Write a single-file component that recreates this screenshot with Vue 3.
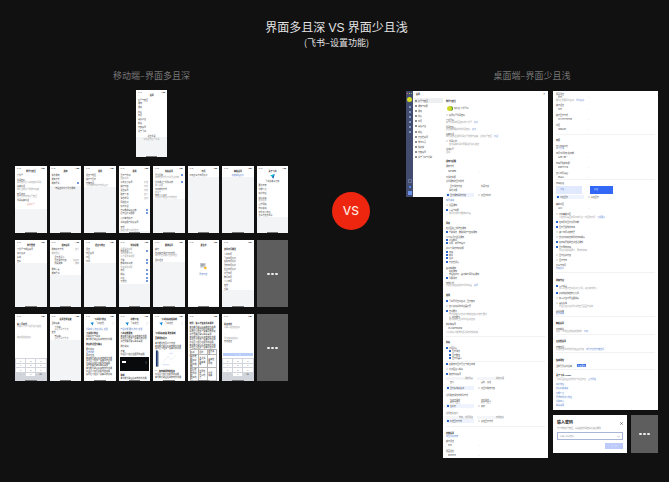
<script setup>
// Each row is [centre line, kind, text, side text]; a row lasts until the next one starts.
const flow = (source) =>
  source.map(([y, kind, text = '', side = ''], i) => ({
    kind, text, side, y,
    height: i + 1 < source.length ? source[i + 1][0] - y : 3,
  }))
const phone = (title, white, rows) => ({ title, white, rows: flow(rows) })

const home = phone('设置', 47, [
  [10, 't', '账号与安全'], [13, 't', '通知'], [17, 't', '通用'], [22, 't', '隐私'], [25, 't', '日历'], [29, 't', '视频会议'],
  [33, 't', '邮箱'], [37, 't', '内部设置'], [41, 't', '关于飞书'], [46, 'c', '退出登录'], [49, 'cg', '切换其他账号登录'],
])
const doc = ['本功能帮助团队高效协作沟通', '设置后可在多个设备同步使用', '管理员可在后台配置的权限', '如果需要帮助请联系客服']

const phones = [
  phone('账号与安全', 43, [[9, 't', '手机号'], [14, 't', '登录密码'], [16, 'g', '设置密码后可使用密码登录'], [20, 't', '设备管理'], [23, 'g', '查看当前账号的所有设备'], [28, 't', '安全验证'], [30, 'g', '用于保护你的账号安全'], [34, 't', '登录设备管理'], [38, 'cr', '注销账号']]),
  phone('通知', 20, [[9, 't', '消息通知'], [13, 't', '通知方式'], [17, 's', '通知开关'], [22, 'c', '电脑在线时手机不通知']]),
  phone('通用', 21, [[9, 't', '语言与地区'], [13, 't', '翻译与显示'], [17, 't', '存储空间'], [19, 'g', '可清理本地缓存文件图片']]),
  phone('通用', 65, [[9, 't', '显示与外观'], [12, 'g', '跟随系统'], [16, 't', '字体大小设置', '标准'], [20, 't', '翻译内容', '中文'], [24, 't', '语言设置', '中文'], [28, 't', '聊天气泡', '默认'], [32, 't', '消息排列', '左侧'], [36, 't', '网络检测', '›'], [40, 't', '缓存管理'], [44, 's', '自动播放视频动态'], [47, 's', '保存图片到相册'], [52, 't', '清除本地缓存', '›'], [56, 't', '系统权限与隐私设置', '›'], [61, 't', '其他'], [64, 'g', '实验功能与系统信息']]),
  phone('隐私设置', 33, [[9, 's', '已读回执'], [11, 'g', '关闭后对方看不到已读状态'], [16, 's', '允许通过手机找到我'], [19, 'g', '搜索权限'], [23, 't', '添加我的方式', '›'], [26, 'g', '黑名单'], [29, 't', '我的个人名片', '›'], [31, 'g', '管理展示在名片中的信息']]),
  phone('日历', 11, [[9, 't', '添加第三方日历账户']]),
  phone('邮箱设置', 11, [[9, 'ck', '绑定邮箱账户']]),
  phone('关于飞书', 51, [[11, 'logo'], [15, 'c', '飞书版本三点四'], [19, 't', '更新日志'], [23, 't', '功能介绍'], [27, 't', '用户协议'], [32, 't', '隐私政策'], [34, 'g', '更多服务'], [38, 't', '官方网站'], [42, 't', '特别说明'], [46, 't', '软件许可协议'], [49, 't', '第三方信息共享']]),
  phone('账号管理', 23, [[9, 't', '手机号与邮箱设置'], [13, 't', '用户名称'], [17, 't', '头像'], [21, 't', '密码']]),
  phone('通知设置', 35, [[9, 't', '通知提示方式', '默认'], [13, 'g', '通知预览'], [17, 'i', '显示发送人'], [20, 'i', '显示消息内容', '仅提示'], [23, 'i', '隐藏通知', '通知'], [29, 't', '通知声音'], [33, 't', '通知震动', '›']]),
  phone('语言与地区', 23, [[9, 't', '语言'], [13, 't', '地区设置'], [17, 't', '时区'], [21, 't', '时间']]),
  phone('特别提醒', 44, [[9, 'g', '重要消息提醒'], [11, 's', '特别关注'], [13, 'g', '消息提醒方式'], [16, 'g', '以下消息将提醒'], [20, 's', '单聊'], [23, 's', '群聊中提到我'], [27, 'g', '应用消息提醒'], [30, 's', '日历'], [34, 's', '邮箱'], [38, 's', '会议'], [41, 's', '云文档']]),
  phone('翻译设置', 22, [[9, 't', '翻译'], [13, 't', '自动翻译消息与云文档'], [15, 'g', '消息会自动翻译目标语言'], [20, 't', '目标语言', '›']]),
  phone('黑名单', 66, [[26, 'cow'], [34, 'ck', '暂无内容']]),
  phone('', 50, [[9, 'b', '选择日历类型'], [14, 't', '公共日历'], [18, 't', '飞书日历账户', '›'], [21, 't', '谷歌日历账户'], [25, 't', '微软日历账户'], [29, 't', '企业日历账户'], [33, 't', '苹果日历'], [37, 't', '腾讯日历'], [41, 't', '个人日历'], [45, 't', '其他'], [49, 't', '帮助']]),
  null,
  { ...phone('', 66, [[10, 'b', '输入手机号'], [12, 'g', '请输入手机号进行身份验证'], [20, 'g', '|'], [23, 'g', '获取短信验证码']]), keypad: true },
  phone('设置登录设备', 26, [[9, 't', '当前设备'], [13, 'i', '手机端'], [15, 'ig', '最近登录于今天'], [18, 't', '其他'], [22, 'i', '电脑端'], [24, 'ig', '最近登录于昨天']]),
  phone('飞书用户协议', 66, [[9, 'brand', '飞书文档'], [15, 'k', '帮助中心 协议 隐私 反馈'], [19, 'bt', '飞书用户协议'], [22, 't', '重要提示与说明'], [25, 't', doc[0]], [30, 'bt', '协议的范围与确认'], [35, 't', '更新说明'], [38, 'k', '生效日期'], [41, 't', '服务内容'], [44, 'p', doc[0]], [46, 'p', doc[1]], [49, 'p', doc[2]], [51, 'p', doc[3]], [54, 'p', doc[0]], [57, 'p', doc[2]], [60, 'p', doc[1]]]),
  phone('功能介绍', 66, [[9, 'brand', '飞书文档'], [15, 'k', '产品功能 更新 协作 反馈'], [19, 'bt', '飞书功能更新'], [22, 'p', doc[0]], [24, 'p', doc[1]], [27, 'p', doc[3]], [32, 't', '操作说明'], [37, 't', '步骤'], [40, 'p', doc[2]], [44, 'video'], [61, 'bt', '说明'], [64, 'p', doc[0]]]),
  phone('飞书隐私政策说明', 66, [[9, 'brand', '飞书文档'], [19, 'bt', '飞书隐私政策 更新说明'], [24, 'bt', '重要更新提示'], [29, 'p', '本次更新包含以下内容'], [32, 'p', doc[0]], [34, 'p', doc[1]], [37, 'image'], [57, 'bt', '一、如何使用你的信息'], [60, 'p', doc[2]], [63, 'p', doc[0]]]),
  { ...phone('', 66, [[9, 'h', '附件：第三方信息共享清单'], [13, 'p', doc[0]], [15, 'p', doc[2]], [17, 'p', doc[1]], [20, 'p', doc[3]], [23, 'p', doc[0]], [25, 'p', doc[1]], [28, 'p', doc[2]], [31, 'p', doc[0]], [33, 'p', doc[1]], [36, 'p', doc[3]], [41, 'bt', '共享信息列表']]), table: true },
  { ...phone('', 66, [[10, 'b', '验证身份'], [13, 'g', '请输入短信验证码'], [19, 'g', '|'], [24, 'g', '重新获取验证码'], [27, 't', '无法验证'], [40, 'next']]), keypad: true },
  null,
]

const nav = ['账号与安全', '通知与提醒', '通用', '隐私', '日历', '视频会议', '邮箱', '云文档设置', '效率工具', '快捷键', '内部设置', '关于飞书与帮助']

const first = flow([
  [10, 'h', '账号与安全'], [17, 'profile', '用户名 手机号码'], [24, 'off', '设置账号登录密码'], [29, 't', '手机号码'], [31, 'g', '用于登录和找回密码的手机号', '修改'],
  [36, 't', '登录密码'], [38, 'g', '建议定期更换你的登录密码', '修改'], [43, 't', '设备管理'], [45, 'g', '查看和管理当前登录账号的所有设备，保障账号安全', '管理'],
  [50, 'off', '登录保护'], [53, 'ig', '在新设备登录时需要进行身份验证'], [58, 't', '注销账号'], [61, 'g', '注销'],
  [70, 'h', '通知与提醒'], [75, 't', '通知方式'], [80, 'sel', '消息通知'], [86, 't', '新消息提醒'], [90, 't', '选择通知的显示样式'],
  [95, 'pair', '显示消息内容', '隐藏内容'], [99, 'i', '消息 提醒'], [104, 'option', '显示通知消息内容', '仅显示提示'], [109, 'k', '查看说明'],
  [114, 'off', '桌面通知'], [119, 'on', '声音与提醒'], [122, 'ig', '收到新消息时播放提示音'],
  [132, 'h', '消息'], [137, 't', '在桌面右上角弹出通知'], [141, 'on', '单聊消息、群聊消息与应用通知'], [146, 't', '以下情况不发送通知'], [149, 'on', '会议期间'], [152, 'on', '锁屏、离开电脑时'],
  [157, 't', '对以下消息特别提醒'], [161, 'on', '日程'], [164, 'on', '邮件'], [167, 'on', '任务'], [171, 'on', '云文档评论'],
  [177, 't', '移动端通知'], [180, 'i', '始终通知'], [183, 'i', '电脑在线时，移动端不再重复通知'], [187, 'on', '重要消息'], [192, 't', '勿扰模式'], [194, 'g', '开启后将在指定的时间内静音', '设置'],
  [204, 'h', '通用'], [210, 'on', '飞书开机自动启动，显示窗口'], [215, 'off', '默认使用系统浏览器打开'], [220, 'on', '自动更新'], [223, 'ig', '有新版本时会自动下载并在空闲时安装更新'],
  [226, 'suboff', '静默更新'], [228, 'ig', '更新完成后自动重新启动应用'], [233, 't', '快捷键设置'], [237, 'sel', '发送消息快捷键'], [241, 'g', '可以按照习惯调整发送消息的快捷键'],
  [246, 'line'], [251, 'h', '隐私'], [257, 'on', '会话列表'], [260, 'subon', '显示消息'], [264, 'subon', '显示群组'], [267, 'subon', '显示机器人'], [271, 'line'],
  [273, 'on', '在聊天中显示已读与未读状态'], [278, 'off', '允许陌生人联系'], [283, 'on', '聊天外观设置'], [287, 'boxes', '消息列表', '消息会话'], [291, 'pair', '默认', '宽松、紧凑'], [297, 'option', '显示头像和名称', '仅显示聊天内容'],
  [304, 't', '选择聊天消息的排列方式'], [309, 'pair', '左对齐消息', '双侧消息'], [311, 'pair', '对方与自己', '对方与自己'], [315, 'option', '左对齐', '双侧'],
  [322, 't', '选择文字大小'], [326, 'boxes', '你好，这是预览', '示例文字'], [330, 'option', '标准显示方式', '紧凑显示方式'], [336, 'line'],
  [342, 'h', '内部设置'], [345, 'k', '导出诊断日志'], [350, 't', '翻译语言'], [354, 'sel', '中文'], [360, 't', '界面语言'], [364, 'sel', '简体中文'],
])

const second = flow([
  [3, 't', '界面语言'], [6, 'sel', '中文'], [9, 'g', '更改后需要重新启动', '重新启动'], [14, 't', '翻译语言'], [18, 'sel', '中文'], [24, 't', '翻译显示方式'], [28, 'sel', '仅显示译文内容'], [34, 't', '时区'], [38, 'sel', '跟随系统'], [44, 'line'],
  [49, 'h', '日历'], [55, 't', '默认日程时长'], [57, 'k', '三十分钟'], [62, 't', '日历时间的起始日期'], [66, 'sel', '每周星期一'], [72, 't', '日程开始前提醒'], [76, 'sel', '提前五分钟'], [82, 't', '默认日历视图'], [86, 'sel', '周视图'], [89, 'line'],
  [92, 't', '日程颜色'], [96, 'swatches', '浅色', '深色'], [106, 'option', '浅色显示', '深色显示'], [113, 't', '辅助时区'], [117, 'sel', '关闭'], [123, 'off', '添加辅助时区'], [126, 'ig', '可在日历视图中同时查看多个时区的时间', '了解更多'],
  [131, 'on', '在日历中显示农历日期'], [136, 'on', '显示已拒绝的日程'], [141, 'off', '减少日历动态效果'], [146, 'off', '自动添加来自邮件的日程邀请'], [151, 'on', '在日程开始前自动发送通知'], [156, 'on', '显示周末日程'], [159, 'ig', '关闭后将隐藏周六、周日的日程'], [164, 'off', '显示任务内容'], [169, 'off', '显示节日'], [174, 't', '第三方日历'], [177, 'k', '添加账户'], [182, 'line'],
  [189, 'h', '视频会议'], [195, 'on', '入会静音'], [197, 'ig', '加入会议时自动关闭麦克风，避免影响他人'], [202, 'on', '使用快捷键控制麦克风'], [207, 'off', '加入会议时开启摄像头'], [212, 'off', '视频镜像'], [215, 'ig', '开启后在会议中看到的自己画面为镜像'], [220, 't', '音频设备'], [222, 'k', '检测设备'], [226, 'line'],
  [232, 'h', '邮箱设置'], [238, 't', '添加邮箱'], [240, 'g', '连接个人或企业邮箱收发邮件', '添加'], [244, 'line'], [250, 'h', '云文档设置'], [256, 't', '存储空间'], [258, 'g', '管理云空间中的文件和团队内容', '查看云文档存储空间'], [262, 'line'],
  [269, 'h', '版本更新'], [275, 'update', '当前已是最新版本'], [279, 'line'], [284, 'h', '关于飞书 Feishu'], [288, 'g', '飞书是面向团队的协作与管理平台', '官方网站'], [293, 'k', '用户协议'], [297, 'k', '隐私政策说明'], [302, 'k', '功能介绍'], [306, 'k', '开源软件许可协议'], [310, 'k', '帮助中心'], [314, 'k', '联系客服'],
])
</script>

<template>
  <main class="board">
    <header class="heading">
      <h1>界面多且深 VS 界面少且浅</h1>
      <p>(飞书–设置功能)</p>
    </header>

    <div class="compare">
      <section class="mobile">
        <h2>移动端–界面多且深</h2>
        <div class="grid">
          <template v-for="(p, n) in [home, ...phones]" :key="n">
            <div v-if="!p" class="more"><i></i><i></i><i></i></div>
            <article v-else class="phone" :class="{ first: n === 0 }">
              <div class="sheet" :style="{ height: p.white + 'px' }">
                <div class="status"><span>9:41</span><b>▪▪▬</b></div>
                <div class="bar"><span>‹</span><strong v-if="p.title">{{ p.title }}</strong><i></i></div>
                <div :style="{ height: p.rows[0].y - 8 + 'px' }"></div>
                <div v-for="(r, i) in p.rows" :key="i" class="row" :class="'k-' + r.kind" :style="{ height: r.height + 'px' }">
                  <label v-if="r.kind === 's'" class="toggle"><span>{{ r.text }}</span><input type="checkbox" checked></label>
                  <svg v-else-if="r.kind === 'logo'" class="bird" viewBox="0 0 16 16"><path d="M1 4 15 1 10 15 7 9Z" fill="#219cdd" /><path d="m7 9 8-8-5 14Z" fill="#174b98" /><path d="m1 4 6 5 8-8Z" fill="#18c6dc" /></svg>
                  <svg v-else-if="r.kind === 'cow'" class="cow" viewBox="0 0 24 24"><path d="M3 3h17v14H3Z" fill="#c9ced4" /><path d="M6 7h11M6 11h8" stroke="#7e868d" stroke-width="2" /><circle cx="19" cy="18" r="4" fill="#f4bd24" /></svg>
                  <template v-else-if="r.kind === 'brand'"><svg viewBox="0 0 16 16"><path d="M1 3 15 1 10 15 7 9Z" fill="#1689d5" /></svg><span>{{ r.text }}</span><em>⋮</em></template>
                  <div v-else-if="r.kind === 'video'" class="video"><i></i><b>⋮</b></div>
                  <svg v-else-if="r.kind === 'image'" class="figure" viewBox="0 0 31 18"><path d="M2 0h2v17H2Z" fill="#183269" /><path d="M4 1h1v16H4Z" fill="#899bbb" /><path d="m9 13 6-7 3 4 5-4" stroke="#eceff4" fill="none" /><path d="M9 15h7M16 3h4" stroke="#d3def5" /></svg>
                  <button v-else-if="r.kind === 'next'" type="button">下一步</button>
                  <template v-else><span>{{ r.text }}</span><em v-if="r.side">{{ r.side }}</em></template>
                </div>
              </div>
              <div v-if="p.keypad" class="keypad"><button v-for="k in ['1','2','3','4','5','6','7','8','9','+','0','⌫']" :key="k" type="button" :class="{ plain: k === '+' || k === '⌫' }">{{ k }}</button></div>
              <table v-if="p.table"><tbody><tr><td>名称</td><td>目的</td><td>信息类型</td></tr><tr><td>消息推送<br>服务提供<br>系统通知</td><td>发送消息<br>设备通知</td><td>设备信息<br>网络</td></tr><tr><td>地图定位<br>位置服务<br>日程地点</td><td>位置信息<br>分享地点</td><td>位置<br>设备</td></tr></tbody></table>
              <div class="homebar"></div>
            </article>
          </template>
        </div>
      </section>

      <div class="versus"><strong>VS</strong></div>

      <section class="desktop">
        <h2>桌面端–界面少且浅</h2>
        <div class="windows">
          <div class="window">
            <aside>
              <div class="rail"><div class="dots"><i></i><i></i><i></i></div><span class="avatar"></span><i v-for="n in 6" :key="n" class="app"></i><span class="gap"></span><i class="app outline"></i><i class="app blue"></i><i class="app bright"></i></div>
              <nav><h3>设置</h3><a v-for="(item, n) in nav" :key="item" href="#" :class="{ active: n === 0 }"><i></i>{{ item }}</a></nav>
            </aside>
            <div class="page tall"><span class="close">×</span>
              <div :style="{ height: first[0].y - 1 + 'px' }"></div>
              <div v-for="(r, i) in first" :key="i" class="row" :class="'k-' + r.kind" :style="{ height: r.height + 'px' }">
                <label v-if="['on','off','subon','suboff'].includes(r.kind)"><input type="checkbox" :checked="r.kind.endsWith('on')"><span>{{ r.text }}</span></label>
                <label v-else-if="r.kind === 'sel'"><select :aria-label="r.text"><option>{{ r.text }}</option></select><b>⌄</b></label>
                <template v-else-if="r.kind === 'option'"><label class="choice chosen"><input :name="'first' + i" type="radio" checked>{{ r.text }}</label><label class="choice"><input :name="'first' + i" type="radio">{{ r.side }}</label></template>
                <template v-else-if="r.kind !== 'line'"><span>{{ r.text }}</span><em v-if="r.side">{{ r.side }}</em></template>
              </div>
            </div>
          </div>

          <div class="second">
            <div class="page">
              <div :style="{ height: second[0].y - 1 + 'px' }"></div>
              <div v-for="(r, i) in second" :key="i" class="row" :class="'k-' + r.kind" :style="{ height: r.height + 'px' }">
                <label v-if="['on','off'].includes(r.kind)"><input type="checkbox" :checked="r.kind === 'on'"><span>{{ r.text }}</span></label>
                <label v-else-if="r.kind === 'sel'"><select :aria-label="r.text"><option>{{ r.text }}</option></select><b>⌄</b></label>
                <template v-else-if="r.kind === 'option'"><label class="choice chosen"><input :name="'second' + i" type="radio" checked>{{ r.text }}</label><label class="choice"><input :name="'second' + i" type="radio">{{ r.side }}</label></template>
                <template v-else-if="r.kind === 'update'"><span>{{ r.text }}</span><button type="button">检查更新</button></template>
                <template v-else-if="r.kind !== 'line'"><span>{{ r.text }}</span><em v-if="r.side">{{ r.side }}</em></template>
              </div>
            </div>
            <div class="bottom">
              <form class="dialog" @submit.prevent>
                <div class="dialog-head"><h3>输入密码</h3><button type="button" aria-label="关闭"><svg viewBox="0 0 8 8"><path d="m1 1 6 6M7 1 1 7" stroke="#555" stroke-width="2" /></svg></button></div>
                <p>为了你的账号安全，请先验证登录密码后继续操作</p>
                <label class="password"><input type="password" placeholder="请输入登录密码" aria-label="登录密码"><svg viewBox="0 0 12 12"><path d="M1 5q5 5 10 0" fill="none" stroke="#8290ae" stroke-width="2" /></svg></label>
                <button class="submit" type="submit">下一步</button>
              </form>
              <div class="more"><i></i><i></i><i></i></div>
            </div>
          </div>
        </div>
      </section>
    </div>
  </main>
</template>

<style>
body { margin: 0; background: #111; }
</style>

<style scoped>
* { box-sizing: border-box; }
.board { min-height: 100vh; background: #111; color: #222; font: 2px/2px "Liberation Sans", "Noto Sans CJK SC", sans-serif; }
.heading { text-align: center; color: #e2e2e2; padding: 20px 0 0 4px; }
h1 { margin: 0; font-size: 12px; line-height: 16px; font-weight: 400; }
.heading p { margin: 1px 0 0; font: 9px/12px "Noto Sans CJK SC", sans-serif; }
.compare { display: grid; grid-template-columns: 273fr 118fr 252fr; padding: 20px 11px 0 15px; }
h2 { margin: 0; color: #777; font: 400 9px/14px "Noto Sans CJK SC", sans-serif; text-align: center; }
.mobile h2 { margin-bottom: 7px; }
.desktop h2 { margin-bottom: 8px; }
.grid { display: grid; grid-template-columns: repeat(8, 1fr); gap: 7px 3px; }
.phone { position: relative; height: 67px; min-width: 0; background: #f3f4f5; overflow: hidden; }
.first { grid-column: 1 / -1; width: 31px; justify-self: center; margin-bottom: 2px; }
.sheet { background: #fff; }
.status, .bar { display: flex; justify-content: space-between; padding: 1px 2px 0; height: 3px; color: #333; }
.status b { color: #222; }
.bar { height: 4px; }
.bar strong { color: #222; }
.row { display: flex; align-items: flex-start; padding: 0 2px; white-space: nowrap; color: #444; }
.row em { margin-left: auto; font-style: normal; color: #999; }
.k-g, .k-ig { color: #999; }
.k-i, .k-ig { padding-left: 5px; }
.k-c, .k-cg, .k-cr, .k-ck { justify-content: center; }
.k-cg { color: #aaa; }
.k-cr { color: #e1a098; }
.k-ck, .k-k { color: #5279c5; }
.k-b { font-size: 2px; font-weight: 700; color: #222; }
.k-bt, .k-h { font-weight: 700; color: #111; }
.k-p { color: #333; }
input { appearance: none; margin: 0; }
.toggle { display: flex; justify-content: space-between; width: 100%; }
.toggle input { width: 3px; height: 3px; border-radius: 1px; background: #2864d8; }
.bird { width: 5px; height: 5px; margin: -2px auto 0; }
.cow { width: 8px; height: 8px; margin: -3px auto 0; }
.k-brand { gap: 2px; padding-left: 6px; color: #444; }
.k-brand svg { width: 4px; height: 4px; }
.k-video, .k-image { padding: 0 1px; }
.video { width: 100%; height: 14px; background: #080a0c; display: flex; justify-content: space-between; padding: 4px 2px; color: #aaa; }
.video i { width: 4px; height: 2px; background: #fff; }
.figure { width: 31px; height: 18px; }
.k-next { padding: 0 1px; }
.k-next button { height: 3px; width: 100%; background: #b8cdf8; color: #dce6fd; }
button { border: 0; padding: 0; font: inherit; color: inherit; background: none; }
.keypad { position: absolute; left: 0; right: 0; bottom: 0; height: 23px; background: #d2d5db; display: grid; grid-template-columns: repeat(3, 1fr); gap: 1px; padding: 1px 1px 5px; }
.keypad button { background: #fff; color: #555; }
.keypad .plain { background: none; }
.homebar { position: absolute; height: 1px; left: 10px; right: 10px; bottom: 0; background: #777; }
table { position: absolute; left: 2px; right: 2px; bottom: 0; height: 22px; border-collapse: collapse; background: #fff; }
td { border: 1px solid #b7b7b7; padding: 0; color: #333; }
.more { background: #5e5e5e; display: flex; align-items: center; justify-content: center; gap: 1px; min-height: 38px; }
.more i { width: 3px; height: 2px; background: #eee; border-radius: 1px; }
.versus { padding: 123px 0 0 8px; display: flex; justify-content: center; align-items: flex-start; }
.versus strong { width: 38px; height: 38px; border-radius: 50%; background: #ef260f; display: flex; align-items: center; justify-content: center; font: 500 12px/14px Inter, sans-serif; color: #ffe5df; }
.windows { display: grid; grid-template-columns: 142fr 105fr; gap: 5px; align-items: start; }
.window { display: grid; grid-template-columns: 37fr 105fr; align-items: start; }
aside { display: flex; height: 106px; background: #fff; }
.rail { width: 7px; flex: none; display: flex; flex-direction: column; align-items: center; gap: 3px; background: #424c6e; padding: 2px 0; }
.dots { display: flex; gap: 1px; }
.dots i { width: 1px; height: 1px; background: #ea6354; }
.dots i:nth-child(2) { background: #e8bd3e; }
.dots i:nth-child(3) { background: #5cbf58; }
.avatar { width: 5px; height: 5px; background: #d8de20; border-radius: 50%; margin-bottom: 1px; }
.app { width: 2px; height: 2px; background: #8496c5; }
.outline { width: 4px; height: 4px; background: none; border: 1px solid #66719a; }
.blue { background: #4d82e8; }
.bright { background: #6b91e9; width: 4px; height: 4px; }
.gap { flex: 1; }
nav { flex: 1; min-width: 0; height: 69px; display: flex; flex-direction: column; padding: 2px 0 0 1px; }
nav h3 { margin: 0 0 3px 2px; font-size: 2px; line-height: 2px; color: #111; }
nav a { flex: 1; display: flex; align-items: center; gap: 1px; padding-left: 1px; color: #444; text-decoration: none; white-space: nowrap; }
nav .active { background: #eeeff1; }
nav i { width: 2px; height: 2px; background: #8c929c; }
.page { position: relative; background: #fff; min-width: 0; overflow: hidden; height: 319px; }
.tall { height: 367px; }
.close { position: absolute; right: 3px; top: 2px; font-size: 3px; }
.page .row { padding: 0 3px; }
.page .row em { margin-left: 2px; color: #648cd4; }
.page .k-ig { padding-left: 6px; color: #999; }
.page .k-g { color: #999; }
.page .k-i { padding-left: 6px; }
.page .k-k { color: #4a78ca; }
.page label { display: flex; gap: 1px; }
.row label input { width: 2px; height: 2px; border: 1px solid #e5e5e5; background: #fff; flex: none; }
.row label input:checked { background: #2c66cc; border-color: #2c66cc; }
.page .k-subon, .page .k-suboff { padding-left: 6px; }
.k-sel label { width: 36px; padding: 0 2px; }
select { appearance: none; flex: 1; min-width: 0; height: 2px; padding: 0; border: 0; background: transparent; color: #444; font: inherit; }
.k-sel b { color: #666; }
.k-profile span { padding-left: 6px; }
.k-profile::before { content: ""; width: 5px; height: 5px; margin: -1px -5px 0 1px; background: #cfdb20; border-radius: 50%; border-right: 1px solid #50883c; }
.choice { width: 28px; margin: -1px 3px 0 0; padding: 1px; height: 4px; }
.chosen { background: #eef3fe; }
.k-line::before { content: ""; flex: 1; height: 1px; background: #f2f2f3; }
.page .k-pair span { width: 31px; padding-left: 4px; }
.page .k-pair em { color: #555; margin-left: 4px; }
.page .k-boxes span, .page .k-boxes em { width: 27px; height: 3px; margin: 0 4px 0 0; background: #f3f5f8; color: #777; text-align: right; }
.page .k-swatches { gap: 8px; }
.page .k-swatches span, .page .k-swatches em { margin: 0; width: 26px; height: 8px; padding: 2px 4px; background: #e1e9ff; color: #6d8ac8; }
.page .k-swatches em { width: 23px; background: #3268f5; color: #d7e2ff; }
.k-update button { margin: -1px 0 0 5px; width: 9px; height: 3px; background: #376ee1; color: #e4edff; }
.second { display: flex; flex-direction: column; gap: 5px; min-width: 0; }
.bottom { display: grid; grid-template-columns: 74fr 27fr; gap: 4px; }
.dialog { background: #fff; height: 38px; padding: 5px 4px 4px; display: flex; flex-direction: column; min-width: 0; }
.dialog-head { display: flex; justify-content: space-between; align-items: center; }
.dialog-head button, .dialog-head svg { display: block; width: 3px; height: 3px; }
.dialog h3 { margin: 0; font-size: 4px; line-height: 6px; color: #222; }
.dialog p { margin: 1px 0 3px; color: #888; white-space: nowrap; }
.password { display: flex; align-items: center; border: 1px solid #a7b5d7; height: 8px; padding: 0 2px; }
.password input { flex: 1; min-width: 0; border: 0; padding: 0; height: 4px; font: 2px/4px "Liberation Sans", "Noto Sans CJK SC", sans-serif; outline: 0; background: none; }
.password input::placeholder { color: #9ba2b2; }
.password svg { width: 3px; height: 3px; }
.submit { margin: 3px 0 0 auto; width: 18px; height: 6px; background: #bdcafa; color: #e2e8ff; }
</style>
